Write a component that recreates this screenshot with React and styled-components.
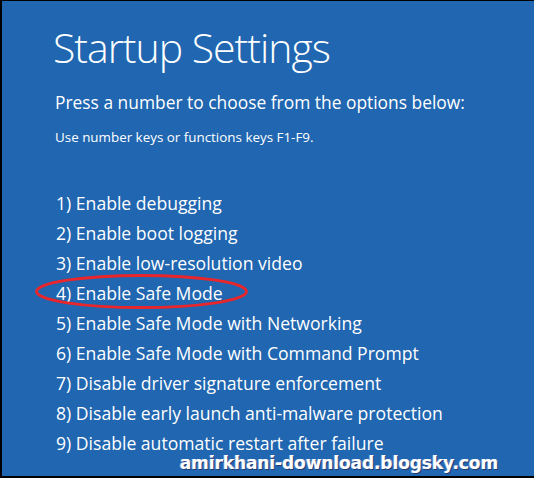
import React from "react";
import styled, { createGlobalStyle } from "styled-components";

const Global = createGlobalStyle`
  html, body { margin: 0; padding: 0; background: #000; }
  body { width: 534px; height: 478px; overflow: hidden; }
`;

const Screen = styled.div`
  position: relative;
  box-sizing: border-box;
  width: 534px;
  height: 478px;
  background: #2066b0;
  border-top: 1px solid #000;
  border-left: 2px solid #000;
  border-bottom: 2px solid #000;
  padding: 20px 0 0 51px;
  color: #fff;
  font-family: "Open Sans", "Noto Sans", sans-serif;
`;

const Title = styled.h1`
  margin: 0;
  font-size: 41px;
  font-weight: 300;
  line-height: 52px;
  letter-spacing: -1px;
`;

const Prompt = styled.p`
  margin: 17px 0 0 2px;
  font-size: 17.4px;
  font-weight: 400;
  line-height: 24px;
`;

const Hint = styled.p`
  margin: 14px 0 0 2px;
  font-size: 13.4px;
  line-height: 18px;
`;

const Options = styled.ol`
  list-style: none;
  margin: 42px 0 0 3px;
  padding: 0;
`;

const Option = styled.li`
  position: relative;
  font-size: 17.6px;
  line-height: 30px;
  height: 30px;
`;

const Circle = styled.svg`
  position: absolute;
  left: -21px;
  top: -3px;
  overflow: visible;
`;

const Watermark = styled.div`
  position: absolute;
  right: 36px;
  bottom: 3px;
  font-family: "DejaVu Sans", "Liberation Sans", sans-serif;
  font-weight: 900;
  font-size: 17px;
  letter-spacing: -0.1px;
  color: #fff;
  text-shadow: 1px 1px 0 #243a6e, -1px 0 0 #6a8cc8, 0.5px 0 0 #fff;
`;

const items = [
  "1) Enable debugging",
  "2) Enable boot logging",
  "3) Enable low-resolution video",
  "4) Enable Safe Mode",
  "5) Enable Safe Mode with Networking",
  "6) Enable Safe Mode with Command Prompt",
  "7) Disable driver signature enforcement",
  "8) Disable early launch anti-malware protection",
  "9) Disable automatic restart after failure",
];

export default function App() {
  return (
    <>
      <Global />
      <Screen>
        <Title>Startup Settings</Title>
        <Prompt>Press a number to choose from the options below:</Prompt>
        <Hint>Use number keys or functions keys F1-F9.</Hint>
        <Options>
          {items.map((t, i) => (
            <Option key={t}>
              {i === 3 && (
                <Circle width="214" height="34" viewBox="0 0 214 34">
                  <ellipse cx="106.5" cy="16.5" rx="105" ry="16" fill="none" stroke="#e8262b" strokeWidth="2.8" />
                </Circle>
              )}
              {t}
            </Option>
          ))}
        </Options>
        <Watermark>amirkhani-download.blogsky.com</Watermark>
      </Screen>
    </>
  );
}
